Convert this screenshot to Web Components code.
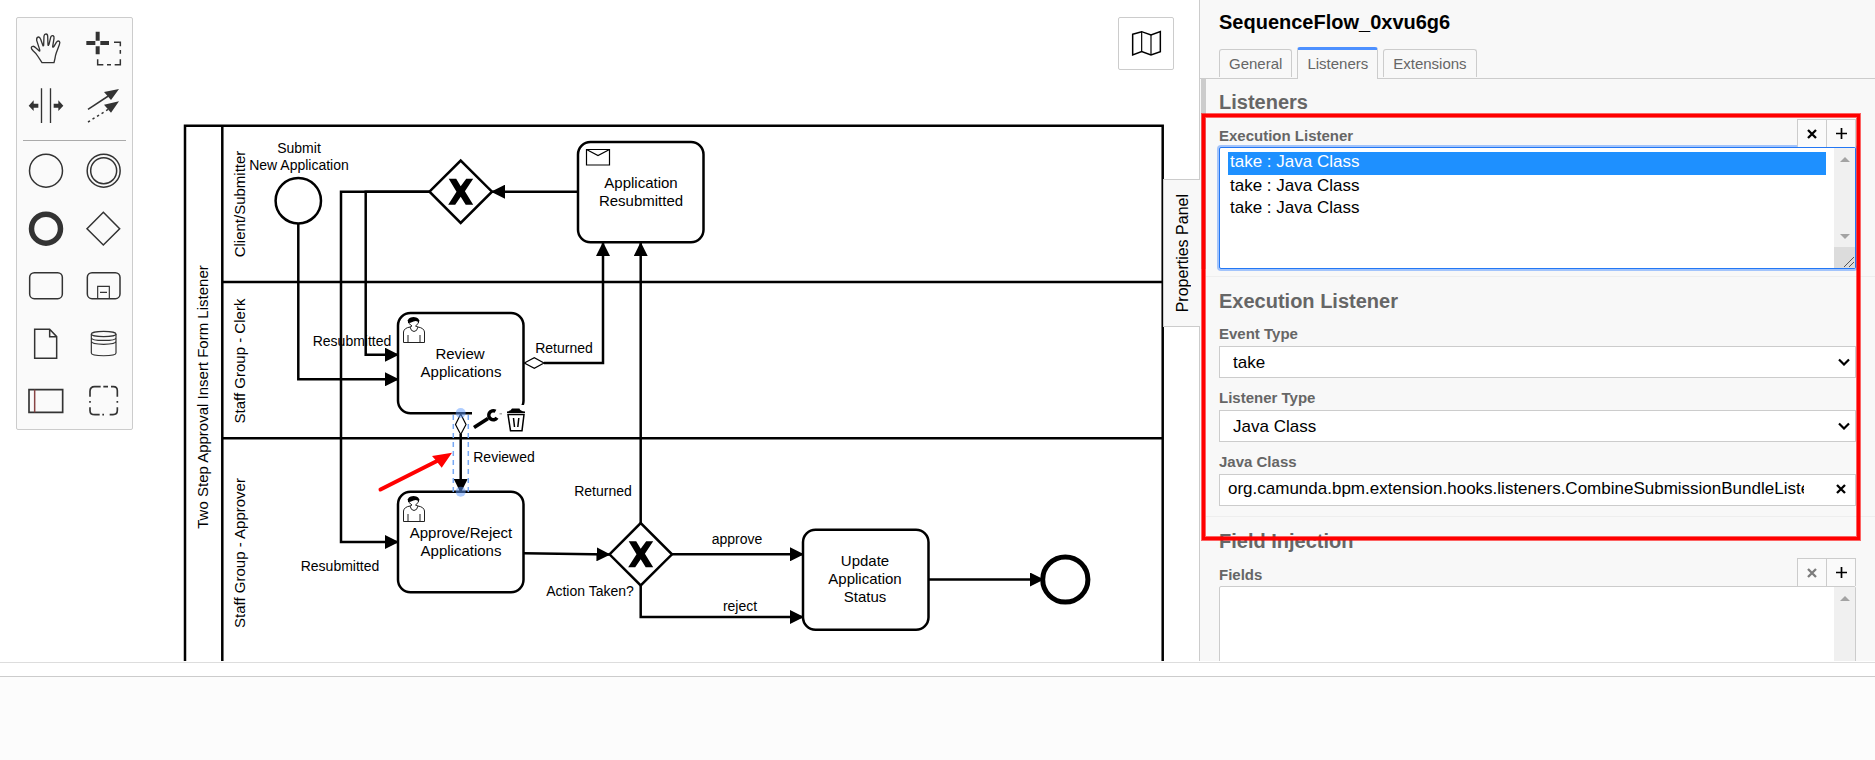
<!DOCTYPE html>
<html lang="en">
<head>
<meta charset="utf-8">
<meta name="viewport" content="width=device-width, initial-scale=1">
<title>BPMN Modeler</title>
<style>
  body { margin: 0; background: #fff; color: #000; font-family: "Liberation Sans", Arial, sans-serif; font-size: 15px; }
</style>
</head>
<body>
<modeler-app></modeler-app>

<template id="t-app">
  <style>
    :host { display: flex; flex-direction: column; height: 100vh; }
    main { flex: 1; min-height: 0; display: flex; padding-bottom: 1px; }
    process-canvas { flex: 1; min-width: 0; }
    properties-panel { flex: 0 0 676px; }
    footer { height: 83px; margin-top: 13px; background: #fcfcfc; border-top: 1px solid #ccc; }
    .edge { border-top: 1px solid #ddd; }
  </style>
  <main>
    <process-canvas>
      <tool-palette slot="palette"></tool-palette>
    </process-canvas>
    <properties-panel name="SequenceFlow_0xvu6g6">
      <panel-section heading="Listeners" class="tight">
        <list-field label="Execution Listener" items="take : Java Class|take : Java Class|take : Java Class" active></list-field>
      </panel-section>
      <panel-section heading="Execution Listener" class="spaced">
        <choice-field label="Event Type" value="take"></choice-field>
        <choice-field label="Listener Type" value="Java Class"></choice-field>
        <clearable-field label="Java Class" value="org.camunda.bpm.extension.hooks.listeners.CombineSubmissionBundleListener"></clearable-field>
      </panel-section>
      <panel-section heading="Field Injection">
        <list-field label="Fields" items=""></list-field>
      </panel-section>
    </properties-panel>
  </main>
  <div class="edge"></div>
  <footer></footer>
</template>

<template id="t-palette">
  <style>
    :host { display: block; box-sizing: border-box; width: 117px; padding: 1px 0; border: 1px solid #ccc; border-radius: 2px; background: #fafafa; }
    .grid { display: grid; grid-template-columns: 57px 58px; }
    .tools { grid-template-rows: 58px 57px; }
    .shapes { grid-template-rows: 58px 57px 58px 57px 57px; }
    hr { margin: 6px 6px 0; border: 0; border-top: 1px solid #aaa; }
    button { display: block; padding: 0; border: 0; background: none; }
    svg { display: block; width: 100%; height: 100%; fill: none; stroke: #333; stroke-width: 4.500; }
    .solid { fill: #333; stroke: none; }
  </style>
  <div class="grid tools">
    <button aria-label="Hand tool"><svg viewBox="51 57 171 174"><path stroke-width="4" stroke-linejoin="round" d="M126 188 L113 168 Q108 160 100 153 L95 147 Q92 140 98 139 Q102 138 108 144 L118 153 Q120 154 119 149 L110 121 Q109 112 115 111 Q119 110 122 118 L129 137 Q131 139 131 134 L132 108 Q133 102 138 102 Q143 102 143 109 L144 135 Q145 138 147 133 L152 112 Q154 106 159 107 Q163 109 162 115 L158 140 Q159 143 162 139 L169 127 Q173 121 178 124 Q181 127 178 134 L169 158 Q166 166 165 175 L162 188 Z"/></svg></button>
    <button aria-label="Lasso tool"><svg viewBox="222 57 174 174"><path stroke-width="12" d="M293 95V122M293 139V163M259 129H286M301 129H327"/><path d="M342 127H361V139M361 150V161M361 178V194H344M333 194H321M310 194H293V178"/></svg></button>
    <button aria-label="Space tool"><svg viewBox="51 231 171 171"><path d="M124.500 265V369M151.500 265V369" stroke-width="4"/><path class="solid" d="M86 317L101 301V311H115V323H101V333ZM190 317L175 301V311H161V323H175V333Z"/></svg></button>
    <button aria-label="Connect tool"><svg viewBox="222 231 174 171"><path d="M264 328L325 288"/><path d="M264 366L325 328" stroke-dasharray="7 9"/><path class="solid" d="M357 267L312 276L333 300ZM357 304L312 314L333 338Z"/></svg></button>
  </div>
  <hr>
  <div class="grid shapes">
    <button aria-label="Start event"><svg viewBox="51 423 171 174"><circle cx="138" cy="512" r="49.500"/></svg></button>
    <button aria-label="Intermediate event"><svg viewBox="222 423 174 174"><circle cx="311" cy="512" r="49.500"/><circle cx="311" cy="512" r="39"/></svg></button>
    <button aria-label="End event"><svg viewBox="51 597 171 171"><circle cx="138" cy="686" r="43.500" stroke-width="16.500"/></svg></button>
    <button aria-label="Gateway"><svg viewBox="222 597 174 171"><path d="M310 637L359 686L310 735L261 686Z"/></svg></button>
    <button aria-label="Task"><svg viewBox="51 768 171 174"><rect x="89" y="818" width="98" height="78" rx="14"/></svg></button>
    <button aria-label="Sub-process"><svg viewBox="222 768 174 174"><rect x="262" y="818" width="98" height="78" rx="14"/><path d="M293 896V859H328V896M300 877H321" stroke-width="3.500"/></svg></button>
    <button aria-label="Data object"><svg viewBox="51 942 171 171"><path d="M104 988H149L170 1010V1075H104ZM149 988V1010H170"/></svg></button>
    <button aria-label="Data store"><svg viewBox="222 942 174 171"><ellipse cx="311" cy="1002" rx="37" ry="8" stroke-width="3.500"/><path stroke-width="3.500" d="M274 1002V1059C274 1070 348 1070 348 1059V1002M274 1013C274 1024 348 1024 348 1013M274 1024C274 1036 348 1036 348 1024"/></svg></button>
    <button aria-label="Pool"><svg viewBox="51 1113 171 171"><path d="M87 1169H188V1237H87Z" stroke-width="5"/><path d="M104 1169V1237" stroke="#844"/></svg></button>
    <button aria-label="Group"><svg viewBox="222 1113 174 171"><path stroke-width="5" d="M270 1190V1174Q270 1160 284 1160H302M333 1160H340Q352 1160 352 1172V1190M352 1222V1231Q352 1244 339 1244H329M299 1244H285Q270 1244 270 1232V1222M270 1203V1208M352 1203V1208M310 1160H324M307 1244H312"/></svg></button>
  </div>
</template>

<template id="t-canvas">
  <style>
    :host { display: block; position: relative; overflow: hidden; background: #fff; }
    .diagram { display: block; width: 100%; height: 100%; }
    slot { display: block; position: absolute; left: 16px; top: 17px; }
    .map { position: absolute; right: 25px; top: 17px; width: 56px; height: 53px; padding: 0; border: 1px solid #ccc; border-radius: 2px; background: #fff; }
    .map svg { display: block; width: 100%; height: 100%; }
    .node, .flow { fill: none; stroke: #000; stroke-width: 2.500; }
    .node { fill: #fff; }
    .thin { fill: #fff; stroke: #000; stroke-width: 1.200; }
    text { font-size: 15px; text-anchor: middle; }
    .caption text { font-size: 14px; }
  </style>
  <svg class="diagram" aria-label="Two Step Approval Insert Form Listener">
    <defs>
      <marker id="tip" viewBox="0 0 14 14" refX="13" refY="7" markerWidth="14" markerHeight="14" markerUnits="userSpaceOnUse" orient="auto"><path d="M0 0L14 7L0 14Z"/></marker>
      <path id="cross" d="M-12-13H-4.500L0-5.500L5.500-13H12.500L4.200-.5L12.500 13H5L0 5L-5.500 13H-12.500L-4.200 0Z"/>
      <g id="user">
        <path fill="#fff" stroke="#222" stroke-width="1" d="M.5 25.500V15Q1 11 7 10L9 9Q5 7 5 3H16Q16 7 12.500 9L15 10Q21 11 21.500 15V25.500ZM5 25V18M17 25V18M7 10Q8 14.500 11 14.500T15 10"/>
        <path d="M5 6Q4 0 10.500 0Q17 0 16 6Q14 3 10.500 4.500Q7 6 5 6Z"/>
      </g>
    </defs>
    <g class="lanes">
      <path class="flow" d="M185 700V125.700H1162.700V700M222.300 125.700V700M222.300 282H1162.700M222.300 438.300H1162.700"/>
      <text transform="translate(208 397) rotate(-90)">Two Step Approval Insert Form Listener</text>
      <text transform="translate(245 204) rotate(-90)">Client/Submitter</text>
      <text transform="translate(245 361) rotate(-90)">Staff Group - Clerk</text>
      <text transform="translate(245 553) rotate(-90)">Staff Group - Approver</text>
    </g>
    <g class="nodes">
      <circle class="node" cx="298.300" cy="200.700" r="22.700"/>
      <path class="node" d="M429.500 191.700L460.700 160.500L492 191.700L460.700 223Z"/>
      <path class="node" d="M609.500 554.300L640.700 523L672 554.300L640.700 585.500Z"/>
      <use href="#cross" x="460.700" y="191.700"/>
      <use href="#cross" x="640.700" y="554.300"/>
      <rect class="node" x="578" y="142" width="125.500" height="100.300" rx="12.500"/>
      <rect class="node" x="398" y="313" width="125.500" height="100.300" rx="12.500"/>
      <rect class="node" x="398" y="491.700" width="125.500" height="100.500" rx="12.500"/>
      <rect class="node" x="803" y="529.700" width="125.500" height="100" rx="12.500"/>
      <circle class="node" cx="1065.300" cy="579.500" r="22.600" style="stroke-width:5"/>
      <path class="thin" d="M586.500 149.500H609.500V165H586.500ZM586.500 149.500L598 155.500L609.500 149.500"/>
      <use href="#user" x="403" y="317"/>
      <use href="#user" x="403" y="496"/>
      <text x="641" y="188">Application</text><text x="641" y="206">Resubmitted</text>
      <text x="460" y="359">Review</text><text x="461" y="377">Applications</text>
      <text x="461" y="538">Approve/Reject</text><text x="461" y="556">Applications</text>
      <text x="865" y="566">Update</text><text x="865" y="584">Application</text><text x="865" y="602">Status</text>
    </g>
    <g class="caption">
      <text x="299" y="153">Submit</text><text x="299" y="170">New Application</text>
      <text x="352" y="346">Resubmitted</text>
      <text x="340" y="571">Resubmitted</text>
      <text x="564" y="353">Returned</text>
      <text x="603" y="496">Returned</text>
      <text x="504" y="462">Reviewed</text>
      <text x="590" y="596">Action Taken?</text>
      <text x="737" y="544">approve</text>
      <text x="740" y="611">reject</text>
    </g>
    <g class="flow">
      <path marker-end="url(#tip)" d="M578 191.700H492"/>
      <path marker-end="url(#tip)" d="M429.500 191.700H341V542H398"/>
      <path marker-end="url(#tip)" d="M429.500 191.700H365.700V354.700H398"/>
      <path marker-end="url(#tip)" d="M298.300 223V379.300H398"/>
      <path marker-end="url(#tip)" d="M544 363H603V243"/>
      <path marker-end="url(#tip)" d="M640.700 523V243"/>
      <path marker-end="url(#tip)" d="M524 553.300L609.500 554.500"/>
      <path marker-end="url(#tip)" d="M672 554.300H803"/>
      <path marker-end="url(#tip)" d="M640.700 585.500V617H803"/>
      <path marker-end="url(#tip)" d="M929 579.500H1043"/>
      <path marker-end="url(#tip)" d="M460.700 434V492"/>
    </g>
    <path class="thin" d="M524.300 363L534.300 357.800L544 363L534.300 368.300Z"/>
    <g class="context-pad">
      <path fill="#fff" d="M472 405H530V434H472Z"/>
      <path stroke="#000" stroke-width="3.800" d="M474 427.500L488 418.500"/>
      <path fill="none" stroke="#000" stroke-width="3.600" d="M495.500 411.300A4.500 4.500 0 1 0 497 417.800"/>
      <path d="M507 411.500Q511 411 512 408.500H519.500Q520 411 525 411.500V413H507Z"/>
      <path fill="none" stroke="#000" stroke-width="1.500" d="M508 414.500H524L522 430.700H510.500ZM513.500 418L514.500 427M518.800 418L517.800 427"/>
      <path fill="#aaa" d="M499.500 413H502V414.500H499.500Z"/>
    </g>
    <g class="selection">
      <path class="thin" d="M460.700 414L466 424.500L460.700 434.500L455.500 424.500Z"/>
      <path fill="none" stroke="#78a9f5" stroke-width="1.500" stroke-dasharray="5 4" d="M453.300 415V493M468.300 415V493"/>
      <circle cx="460.700" cy="413" r="5" fill="#609cff" fill-opacity=".5"/>
      <circle cx="460.700" cy="491.700" r="5" fill="#609cff" fill-opacity=".5"/>
    </g>
    <path d="M380.500 489.500L437 461" stroke="#f00" stroke-width="4" stroke-linecap="round"/>
    <path d="M452 452.700L432 456L436 460.500L441.700 467.700Z" fill="#f00"/>
  </svg>
  <slot name="palette"></slot>
  <button class="map" aria-label="Toggle minimap"><svg viewBox="57 54 162 153" fill="none" stroke="#000" stroke-width="4.500"><path d="M98 103L125 95L153 105L181 95V155L153 165L125 155L98 165Z"/><path stroke-width="3.500" d="M125 95V155M153 105V165"/></svg></button>
</template>

<template id="t-panel">
  <style>
    :host { display: flex; flex-direction: column; box-sizing: border-box; position: relative; min-width: 0; background: #f8f8f8; border-left: 1px solid #ccc; }
    header { padding: 10px 19px 0; border-bottom: 1px solid #ccc; }
    h1 { margin: 0 0 13px; font-size: 20px; line-height: 24px; }
    nav { display: flex; align-items: flex-end; gap: 5px; }
    nav a { box-sizing: border-box; height: 28px; padding: 0 9px; margin-bottom: 1px; border: 1px solid #ccc; border-bottom: 0; border-radius: 3px 3px 0 0; font-size: 15px; line-height: 28px; color: #666; text-decoration: none; }
    nav a.active { height: 32px; margin-bottom: -1px; border-top: 3px solid #4d90ff; background: #f8f8f8; }
    .body { flex: 1; min-height: 0; overflow: hidden; position: relative; }
    .thumb { position: absolute; left: 1px; top: 0; width: 5px; height: 190px; background: #ccc; }
    .toggle { position: absolute; right: 100%; top: 179px; width: 37px; height: 148px; padding: 0; border: 1px solid #ccc; border-right: 0; background: #f8f8f8; color: #000; font-family: inherit; font-size: 16px; }
    .toggle span { display: block; margin: auto; writing-mode: vertical-rl; rotate: 180deg; line-height: 35px; }
    .marker { position: absolute; left: 2px; right: 15px; top: 114px; height: 420px; border: 3px solid #f00; box-shadow: 0 0 0 1px rgba(255,0,0,.6), inset 0 0 0 1px rgba(255,0,0,.6); pointer-events: none; }
  </style>
  <header>
    <h1></h1>
    <nav><a href="#general">General</a><a href="#listeners" class="active">Listeners</a><a href="#extensions">Extensions</a></nav>
  </header>
  <div class="body"><div class="thumb"></div><slot></slot></div>
  <button class="toggle"><span>Properties Panel</span></button>
  <div class="marker"></div>
</template>

<template id="t-section">
  <style>
    :host { display: block; margin-left: 6px; padding: 12px 19px 10px 13px; border-bottom: 1px solid #eee; }
    :host(.tight) { padding-top: 11px; padding-bottom: 7px; }
    h2 { margin: 0 0 5px; font-size: 20px; line-height: 24px; color: #666; }
    :host(.spaced) h2 { margin-bottom: 12px; }
    .fields { display: flex; flex-direction: column; gap: 11px; }
  </style>
  <h2></h2>
  <div class="fields"><slot></slot></div>
</template>

<template id="t-choice">
  <style>
    :host { display: block; }
    label { display: block; margin-bottom: 3px; font-size: 15px; font-weight: bold; line-height: 18px; color: #666; }
    .box { display: grid; align-items: center; }
    select, svg { grid-area: 1 / 1; }
    select { appearance: none; box-sizing: border-box; width: 100%; height: 32px; padding: 0 30px 0 13px; border: 1px solid #ccc; border-radius: 0; background: #fff; color: #000; font-family: inherit; font-size: 17px; }
    svg { justify-self: end; margin-right: 6px; pointer-events: none; }
  </style>
  <label for="f"></label>
  <div class="box"><select id="f"></select><svg width="12" height="8" fill="none" stroke="#000" stroke-width="2.200"><path d="M1 1.500L6 6.500L11 1.500"/></svg></div>
</template>

<template id="t-clearable">
  <style>
    :host { display: block; }
    label { display: block; margin-bottom: 3px; font-size: 15px; font-weight: bold; line-height: 18px; color: #666; }
    .box { display: flex; height: 30px; border: 1px solid #ccc; background: #fff; }
    input { flex: 1; min-width: 0; margin: 0 23px 0 8px; padding: 0 0 2px; border: 0; background: none; color: #000; font-family: inherit; font-size: 17px; }
    button { width: 28px; padding: 0 0 2px; border: 0; background: none; }
    svg { display: block; margin: auto; }
  </style>
  <label for="f"></label>
  <div class="box"><input id="f" type="text"><button aria-label="Clear"><svg width="10" height="10" stroke="#000" stroke-width="2.300"><path d="M1 1L9 9M9 1L1 9"/></svg></button></div>
</template>

<template id="t-list">
  <style>
    :host { display: block; }
    .top { position: relative; z-index: 1; display: flex; height: 28px; align-items: flex-end; justify-content: space-between; }
    label { margin-bottom: 2px; font-size: 15px; font-weight: bold; line-height: 18px; color: #666; }
    .actions { display: flex; border: 1px solid #ccc; border-bottom: 0; background: #fafafa; }
    .actions button { width: 28px; height: 27px; padding: 0; border: 0; background: none; color: #000; }
    .actions button + button { width: 29px; border-left: 1px solid #ccc; }
    .actions svg { display: block; margin: auto; }
    .remove { opacity: .5; }
    :host([active]) .remove { opacity: 1; }
    .box { display: flex; height: 120px; border: 1px solid #ccc; border-radius: 2px; background: #fff; }
    :host([active]) .box { border-color: #2377f4; box-shadow: 0 0 0 2px #a3c4fb; }
    select { flex: 1; min-width: 0; padding: 4px 8px; border: 0; outline: 0; overflow: hidden; background: none; color: #000; font-family: inherit; font-size: 17px; }
    option { box-sizing: border-box; height: 22px; min-height: 22px; padding: 1px 2px; line-height: 20px; color: #000; }
    option:checked { height: 23px; padding-top: 0; color: #fff; background: linear-gradient(#1e90ff, #1e90ff); }
    .bar { display: flex; flex-direction: column; align-items: center; width: 21px; background: #f0f0f0; }
    .bar svg { display: block; }
    .up { margin-top: 9px; }
    .down { margin-top: auto; margin-bottom: 8px; }
    .grip { align-self: stretch; height: 21px; background: #dcdcdc; }
    .grip svg { margin: 10px 1px 0 auto; }
  </style>
  <div class="top">
    <label for="f"></label>
    <div class="actions">
      <button class="remove" aria-label="Remove"><svg width="10" height="10" stroke="#000" stroke-width="2.300"><path d="M1 1L9 9M9 1L1 9"/></svg></button>
      <button aria-label="Add"><svg width="11" height="11" stroke="#000" stroke-width="1.700"><path d="M5.500 0V11M0 5.500H11"/></svg></button>
    </div>
  </div>
  <div class="box">
    <select id="f" size="5"></select>
    <div class="bar">
      <svg class="up" width="10" height="5"><path fill="#a3a3a3" d="M0 5L5 0L10 5Z"/></svg>
      <svg class="down" width="10" height="5"><path fill="#a3a3a3" d="M0 0L5 5L10 0Z"/></svg>
      <div class="grip"><svg width="10" height="10" stroke="#555" stroke-width="1"><path d="M0 10L10 0M5 10L10 5"/></svg></div>
    </div>
  </div>
</template>

<script>
  class TemplateElement extends HTMLElement {
    constructor() {
      super();
      this.attachShadow({ mode: "open" });
      const template = document.getElementById(this.constructor.template);
      this.shadowRoot.append(template.content.cloneNode(true));
    }
    find(selector) { return this.shadowRoot.querySelector(selector); }
  }

  class ToolPalette extends TemplateElement { static template = "t-palette"; }
  class ProcessCanvas extends TemplateElement { static template = "t-canvas"; }

  class PropertiesPanel extends TemplateElement {
    static template = "t-panel";
    connectedCallback() { this.find("h1").textContent = this.getAttribute("name"); }
  }

  class PanelSection extends TemplateElement {
    static template = "t-section";
    connectedCallback() { this.find("h2").textContent = this.getAttribute("heading"); }
  }

  class ChoiceField extends TemplateElement {
    static template = "t-choice";
    connectedCallback() {
      this.find("label").textContent = this.getAttribute("label");
      this.find("select").replaceChildren(new Option(this.getAttribute("value")));
    }
  }

  class ClearableField extends TemplateElement {
    static template = "t-clearable";
    connectedCallback() {
      const input = this.find("input");
      this.find("label").textContent = this.getAttribute("label");
      input.value = this.getAttribute("value");
      this.find("button").onclick = () => { input.value = ""; };
    }
  }

  class ListField extends TemplateElement {
    static template = "t-list";
    connectedCallback() {
      this.find("label").textContent = this.getAttribute("label");
      const items = this.getAttribute("items").split("|").filter(Boolean);
      this.find("select").replaceChildren(...items.map((text, i) => new Option(text, i, i === 0, i === 0)));
    }
  }

  class ModelerApp extends TemplateElement { static template = "t-app"; }

  customElements.define("tool-palette", ToolPalette);
  customElements.define("process-canvas", ProcessCanvas);
  customElements.define("panel-section", PanelSection);
  customElements.define("choice-field", ChoiceField);
  customElements.define("clearable-field", ClearableField);
  customElements.define("list-field", ListField);
  customElements.define("properties-panel", PropertiesPanel);
  customElements.define("modeler-app", ModelerApp);
</script>
</body>
</html>
